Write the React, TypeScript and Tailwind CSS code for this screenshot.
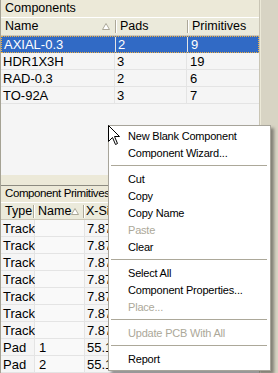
import React from 'react';

const topRows = [
  { name: 'AXIAL-0.3', pads: '2', prims: '9', selected: true },
  { name: 'HDR1X3H', pads: '3', prims: '19' },
  { name: 'RAD-0.3', pads: '2', prims: '6' },
  { name: 'TO-92A', pads: '3', prims: '7' },
];

const primRows = [
  ...Array.from({ length: 7 }, () => ({ type: 'Track', name: '', x: '7.87' })),
  { type: 'Pad', name: '1', x: '55.1' },
  { type: 'Pad', name: '2', x: '55.1' },
];

type MenuEntry = { label: string; disabled?: boolean } | 'sep';

const menu: MenuEntry[] = [
  { label: 'New Blank Component' },
  { label: 'Component Wizard...' },
  'sep',
  { label: 'Cut' },
  { label: 'Copy' },
  { label: 'Copy Name' },
  { label: 'Paste', disabled: true },
  { label: 'Clear' },
  'sep',
  { label: 'Select All' },
  { label: 'Component Properties...' },
  { label: 'Place...', disabled: true },
  'sep',
  { label: 'Update PCB With All', disabled: true },
  'sep',
  { label: 'Report' },
];

const SortArrow = () => (
  <svg width="8" height="7" viewBox="0 0 8 7" className="shrink-0">
    <path d="M4 0.5 L7.5 6.5 L0.5 6.5 Z" fill="#ffffff" stroke="#aca899" strokeWidth="1" />
  </svg>
);

const HeadSep = () => <div className="w-[2px] h-[13px] border-l border-[#aca899] border-r border-r-white shrink-0" />;

export default function App() {
  return (
    <div className="w-[278px] h-[373px] overflow-hidden relative flex bg-[#d8d4c4] font-['Liberation_Sans_Narrow','Liberation_Sans',Arial,sans-serif] text-[12.5px] text-black leading-none">
      <div className="w-[260px] flex flex-col border-l border-[#a5a294] border-r border-r-[#c9c5b5] shrink-0">
        {/* top panel */}
        <div className="h-[181px] flex flex-col bg-[#f5f5f5]">
          <div className="h-[17px] bg-[#ece9d8] flex items-center pl-[4px]">Components</div>
          <div className="h-[19px] bg-[#ebeadb] border-t border-white border-b border-b-[#cbc7b8] flex items-center">
            <div className="w-[114px] flex items-center justify-between pl-[4px] pr-[5px]">
              <span>Name</span>
              <SortArrow />
            </div>
            <HeadSep />
            <div className="w-[70px] pl-[3px]">Pads</div>
            <HeadSep />
            <div className="flex-1 pl-[3px]">Primitives</div>
          </div>
          {topRows.map((r) => (
            <div
              key={r.name}
              className={
                r.selected
                  ? 'h-[17px] flex bg-[#316ac5] text-white border border-dotted border-[#f0b040] text-[13px]'
                  : 'h-[17px] flex border-b border-[#e4e4e4] text-[13px]'
              }
            >
              <div className="w-[114px] flex items-center pl-[2px] border-r border-[#e4e4e4]">{r.name}</div>
              <div className="w-[72px] flex items-center pl-[2px] border-r border-[#e4e4e4]">{r.pads}</div>
              <div className="flex-1 flex items-center pl-[3px]">{r.prims}</div>
            </div>
          ))}
          <div className="flex-1" />
        </div>

        {/* splitter */}
        <div className="h-[10px] bg-[#ece9d8]" />

        {/* lower panel */}
        <div className="flex-1 flex flex-col bg-[#f5f5f5] border-t border-[#8c8a80]">
          <div className="h-[16px] bg-[#ece9d8] flex items-center pl-[4px] shrink-0 text-[11.5px] tracking-[-0.4px]">Component Primitives</div>
          <div className="h-[18px] bg-[#ebeadb] border-t border-white border-b border-b-[#cbc7b8] flex items-center shrink-0">
            <div className="w-[32px] pl-[4px]">Type</div>
            <HeadSep />
            <div className="w-[48px] flex items-center justify-between pl-[3px] pr-[7px]">
              <span>Name</span>
              <SortArrow />
            </div>
            <HeadSep />
            <div className="flex-1 pl-[1px]">X-Size</div>
          </div>
          {primRows.map((r, i) => (
            <div key={i} className="h-[17px] flex border-b border-[#e4e4e4] shrink-0 text-[13px]">
              <div className="w-[34px] flex items-center pl-[2px] border-r border-[#e4e4e4]">{r.type}</div>
              <div className="w-[50px] flex items-center pl-[4px] border-r border-[#e4e4e4] bg-[#f9f9f9]">{r.name}</div>
              <div className="flex-1 flex items-center pl-[2px]">{r.x}</div>
            </div>
          ))}
        </div>
      </div>

      {/* right strip */}
      <div className="flex-1 border-l border-[#ece9d8]" />

      {/* context menu */}
      <div className="absolute left-[108px] top-[125px] w-[163px] bg-white border border-[#a7a49a] shadow-[3px_3px_3px_rgba(0,0,0,0.4)] py-[2px] flex flex-col font-['Liberation_Sans',Arial,sans-serif] text-[11px] tracking-[-0.2px]">
        {menu.map((m, i) =>
          m === 'sep' ? (
            <div key={i} className="h-[9px] pt-[3px] pl-[2px] pr-[3px]">
              <div className="h-px bg-[#aca899]" />
            </div>
          ) : (
            <div
              key={i}
              className={'h-[17px] flex items-center pl-[19px] ' + (m.disabled ? 'text-[#aca899]' : 'text-black')}
            >
              {m.label}
            </div>
          )
        )}
      </div>

      {/* mouse pointer */}
      <svg className="absolute left-[108px] top-[125px]" width="13" height="21" viewBox="0 0 13 21">
        <path
          d="M0.5 0.5 L0.5 16.5 L4.5 12.5 L7.5 19.5 L9.5 18.5 L6.5 11.5 L11.5 11.5 Z"
          fill="#ffffff"
          stroke="#000000"
          strokeWidth="1"
          strokeLinejoin="miter"
        />
      </svg>
    </div>
  );
}
